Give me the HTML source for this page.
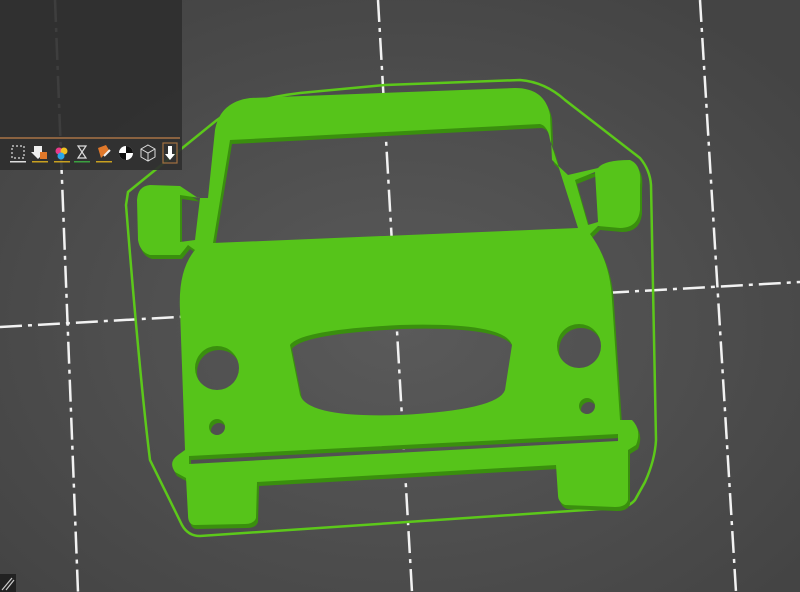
<!DOCTYPE html>
<html><head><style>
html,body{margin:0;padding:0;background:#4b4b4b;}
svg{display:block}
</style></head><body>
<svg width="800" height="592" viewBox="0 0 800 592" xmlns="http://www.w3.org/2000/svg">
<defs>
<radialGradient id="bg" cx="50%" cy="55%" r="65%">
<stop offset="0" stop-color="#5a5a5a"/><stop offset="1" stop-color="#444"/>
</radialGradient>
</defs>
<rect width="800" height="592" fill="url(#bg)"/>
<g stroke="#f2f2f2" stroke-width="2.5" stroke-dasharray="22,6,4,6" fill="none">
<line x1="55" y1="0" x2="78" y2="592"/>
<line x1="378" y1="0" x2="412" y2="592"/>
<line x1="700" y1="0" x2="736" y2="592"/>
<line x1="0" y1="327" x2="800" y2="282"/>
</g>
<!-- skirt -->
<path d="M128,192 L212,124 Q240,100 300,93 L385,85 L520,80 Q545,82 565,100 L640,158 Q650,170 651,185 L656,440 Q655,460 645,482 L635,500 Q628,508 615,508 L200,536 Q188,536 182,525 L150,460 Q140,380 126,205 Z" fill="none" stroke="#5cc81a" stroke-width="2.5"/>
<!-- car shadow -->
<g fill="#3a8f0e" transform="translate(2,4)">
<path id="car" fill-rule="evenodd" d="M215,130 Q220,102 250,98 L515,88 Q545,88 550,115 L552,160 L568,175 L598,168 Q604,160 630,160 Q642,165 640,185 L640,210 Q638,228 620,228 L598,226 L590,234 Q610,260 612,300 L620,420 L632,420 Q642,430 636,445 L628,450 L628,500 Q626,507 615,507 L565,505 Q558,502 558,495 L556,465 L257,482 L256,518 Q254,524 245,524 L195,525 Q188,525 188,515 L186,478 L175,472 Q168,462 178,455 L185,450 L180,310 Q178,270 195,250 L188,245 L180,255 L150,255 Q140,252 138,240 L137,200 Q138,186 150,185 L180,186 L198,198 L208,198 Z
M230,140 L540,124 Q548,126 550,140 L578,228 L213,243 Z
M180,195 L200,198 L195,240 L180,242 Z
M575,180 L595,172 L598,222 L588,225 Z
M290,345 Q300,330 400,325 Q505,322 512,345 L505,390 Q498,410 400,415 Q308,418 300,395 Z
M195,368 a22,22 0 1,0 44,0 a22,22 0 1,0 -44,0 Z
M557,346 a22,22 0 1,0 44,0 a22,22 0 1,0 -44,0 Z
M209,427 a8,8 0 1,0 16,0 a8,8 0 1,0 -16,0 Z
M579,406 a8,8 0 1,0 16,0 a8,8 0 1,0 -16,0 Z
M189,456 L618,434 L618,441 L189,464 Z"/>
</g>
<use href="#car" fill="#56c41a"/>
<!-- toolbar panel -->
<rect x="0" y="0" width="182" height="170" fill="#2f2f2f" opacity="0.92"/>
<rect x="0" y="137" width="180" height="2" fill="#8a6240"/>
<g font-family="Liberation Sans,sans-serif" font-size="11">
<rect x="12" y="146" width="12" height="12" fill="none" stroke="#ddd" stroke-width="1.2" stroke-dasharray="2,2"/>
<rect x="10" y="161" width="16" height="1.5" fill="#ddd"/>
<path d="M34,146 h8 v6 h3 l-7,7 -7,-7 h3z" fill="#eee"/><rect x="40" y="152" width="7" height="7" fill="#e0782a"/>
<rect x="32" y="161" width="16" height="1.5" fill="#c8a020"/>
<circle cx="59" cy="151" r="3.5" fill="#e83a8a"/><circle cx="64" cy="151" r="3.5" fill="#f0c020"/><circle cx="61" cy="156" r="3.5" fill="#2aa6e8"/>
<rect x="54" y="161" width="16" height="1.5" fill="#c8a020"/>
<path d="M78,146 h8 l-4,6 4,6 h-8 l4,-6z" fill="none" stroke="#ddd" stroke-width="1.2"/>
<rect x="74" y="161" width="16" height="1.5" fill="#3aa040"/>
<path d="M98,148 l8,-3 3,5 -8,8z" fill="#e0782a"/><path d="M104,156 l6,-6" stroke="#eee" stroke-width="2"/>
<rect x="96" y="161" width="16" height="1.5" fill="#c8a020"/>
<circle cx="126" cy="153" r="7" fill="#fff"/><path d="M126,146 a7,7 0 0,1 7,7 h-7z M126,153 h-7 a7,7 0 0,0 7,7z" fill="#111"/>
<path d="M148,145 l7,4 v8 l-7,4 -7,-4 v-8z M141,149 l7,4 7,-4 M148,153 v8" fill="none" stroke="#ddd" stroke-width="1"/>
<rect x="163" y="143" width="14" height="20" fill="none" stroke="#a07040" stroke-width="1.2"/>
<path d="M168,146 h4 v8 h3 l-5,6 -5,-6 h3z" fill="#fff"/>
</g>
<rect x="0" y="574" width="16" height="18" fill="#222"/>
<path d="M2,590 l10,-12 M6,590 l8,-10" stroke="#ccc" stroke-width="1.2"/>
</svg>
</body></html>
